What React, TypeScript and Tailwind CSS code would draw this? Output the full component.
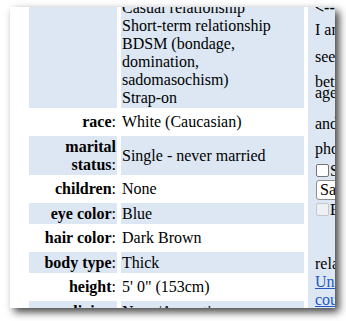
const profile = [
  {
    label: "looking for",
    lines: [
      "Friends",
      "Activity partners",
      "Casual relationship",
      "Short-term relationship",
      "BDSM (bondage, domination, sadomasochism)",
      "Strap-on",
    ],
  },
  { label: "race", lines: ["White (Caucasian)"] },
  { label: "marital status", lines: ["Single - never married"] },
  { label: "children", lines: ["None"] },
  { label: "eye color", lines: ["Blue"] },
  { label: "hair color", lines: ["Dark Brown"] },
  { label: "body type", lines: ["Thick"] },
  { label: "height", lines: [`5' 0" (153cm)`] },
  { label: "religion", lines: ["None/Agnostic"] },
  { label: "smoking", lines: ["Non-smoker"] },
  { label: "drinking", lines: ["Social drinker"] },
];

function Checkbox({ disabled }: { disabled?: boolean }) {
  return (
    <span
      className={
        disabled
          ? "ml-[1px] h-[13px] w-[13px] shrink-0 rounded-[2px] border border-[#c4c8cc] bg-[#eef1f4]"
          : "ml-[1px] h-[13px] w-[13px] shrink-0 rounded-[2px] border border-[#767676] bg-white"
      }
    />
  );
}

export default function App() {
  return (
    <div className="h-[321px] w-[346px] bg-white pl-[10px] pt-[7px] font-[Liberation_Serif,serif] text-[16px] leading-[18px] text-black">
      <div className="flex h-[301px] w-[325px] gap-[4px] overflow-hidden bg-white shadow-[4px_4px_8px_rgba(0,0,0,0.75)]">
        {/* profile details */}
        <div className="shrink-0 pl-[19px]">
          <div className="-mt-[46px] grid grid-cols-[88px_183px] gap-x-[4px] gap-y-[3.5px]">
            {profile.map((row, i) => {
              const shaded = i % 2 === 0;
              const first = i === 0;
              return [
                <div
                  key={row.label + "-l"}
                  className={`flex justify-end px-[1px] py-[1.5px] text-right ${
                    first ? "items-start" : "items-center"
                  } ${shaded ? "bg-[#dce7f3]" : "bg-white"}`}
                >
                  <span>
                    <b>{row.label}</b>:
                  </span>
                </div>,
                <div
                  key={row.label + "-v"}
                  className={`flex flex-col justify-center px-[1px] py-[1.5px] ${
                    shaded ? "bg-[#dce7f3]" : "bg-white"
                  }`}
                >
                  {row.lines.map((line) => (
                    <div key={line}>{line}</div>
                  ))}
                </div>,
              ];
            })}
          </div>
        </div>

        {/* search sidebar */}
        <div className="flex w-[200px] shrink-0 flex-col bg-[#dce7f3] pl-[7px]">
          <div className="-mt-[8px] font-bold">&lt;-- Back</div>
          <div className="mt-[4px]">I am</div>
          <div className="mt-[9px]">seeking</div>
          <div className="mt-[10px] leading-[11px]">
            <div>between</div>
            <div>ages</div>
          </div>
          <div className="mt-[17px]">and</div>
          <div className="mt-[7px]">photo</div>
          <label className="mt-[6px] flex h-[13px] items-center gap-[1px] leading-[13px]">
            <Checkbox />
            <span>Show only with photos</span>
          </label>
          <div className="mt-[3px] ml-[1px] flex h-[22px] w-[150px] items-center rounded-[3px] border border-[#8f8f8f] bg-white px-[3px]">
            Saved searches
          </div>
          <label className="mt-[3px] flex h-[13px] items-center gap-[1px] leading-[13px]">
            <Checkbox disabled />
            <span>Exact match</span>
          </label>
          <div className="mt-[39px]">related searches:</div>
          <a href="#" className="text-[#2457c5] underline">
            United States
          </a>
          <a href="#" className="text-[#2457c5] underline">
            country singles
          </a>
        </div>
      </div>
    </div>
  );
}
